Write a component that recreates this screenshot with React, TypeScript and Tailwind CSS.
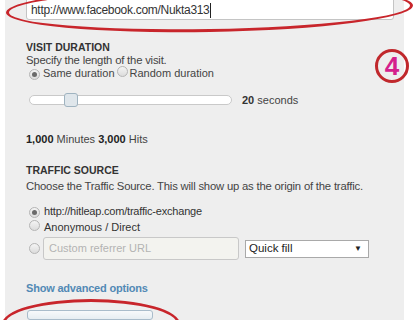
import React from "react";

function Radio({ checked }: { checked?: boolean }) {
  return (
    <span className="inline-flex items-center justify-center w-[11px] h-[11px] rounded-full border border-[#b5b5b5] bg-gradient-to-b from-[#f4f4f4] to-[#dcdcdc] shrink-0">
      {checked && <span className="w-[5px] h-[5px] rounded-full bg-[#6a6a6a]" />}
    </span>
  );
}

export default function App() {
  return (
    <div
      className="relative w-[420px] h-[320px] overflow-hidden bg-white text-[#333]"
      style={{ fontFamily: '"Liberation Sans", Arial, sans-serif' }}
    >
      <div className="ml-[5px] w-[399px] h-[320px] bg-[#eeeeee] pl-[21px] flex flex-col">
        {/* URL input */}
        <div className="-mt-[3px] w-[368px] h-[27px] border border-[#c4c4c4] rounded-[3px] bg-white flex items-center pl-[4px] pt-[3px] text-[12px] tracking-[-0.3px] text-[#333]">
          <span>http://www.facebook.com/Nukta313</span>
          <span className="w-[1px] h-[15px] bg-[#222]" />
        </div>

        <div className="mt-[20px] text-[10.5px] font-bold leading-[14px]">VISIT DURATION</div>
        <div className="-mt-[1px] text-[11.3px] leading-[14px] tracking-[-0.2px] text-[#444]">Specify the length of the visit.</div>
        <div className="-mt-[1px] flex items-center text-[11px] leading-[14px] text-[#444]">
          <span className="ml-[3px]"><Radio checked /></span>
          <span className="ml-[3px]">Same duration</span>
          <span className="ml-[2px]"><Radio /></span>
          <span className="ml-[2px]">Random duration</span>
        </div>
        <div className="mt-[12px] pl-[3px] grid grid-cols-[213px_auto] items-center">
          <div className="relative h-[10px] w-[203px] rounded-[5px] border border-[#c9c9c9] bg-white">
            <div className="absolute left-[34px] top-[-3px] w-[14px] h-[14px] rounded-[3px] border border-[#9fb3c0] bg-[#dfe6eb]" />
          </div>
          <div className="text-[11px] text-[#444]">
            <span className="font-bold text-[#333]">20</span> seconds
          </div>
        </div>

        <div className="mt-[23px] text-[11px] leading-[14px] text-[#444]">
          <span className="font-bold text-[#222]">1,000</span> Minutes <span className="font-bold text-[#222]">3,000</span> Hits
        </div>

        <div className="mt-[17px] text-[10.5px] font-bold leading-[14px]">TRAFFIC SOURCE</div>
        <div className="mt-[2px] text-[11.3px] leading-[14px] tracking-[-0.2px] text-[#444]">
          Choose the Traffic Source. This will show up as the origin of the traffic.
        </div>

        <div className="mt-[11px] flex items-center text-[11px] leading-[14px] text-[#333]">
          <span className="ml-[3px]"><Radio checked /></span>
          <span className="ml-[4px] tracking-[-0.2px]">http://hitleap.com/traffic-exchange</span>
        </div>
        <div className="mt-[2px] flex items-center text-[11px] leading-[14px] text-[#333]">
          <span className="ml-[3px]"><Radio /></span>
          <span className="ml-[4px]">Anonymous / Direct</span>
        </div>
        <div className="mt-[3px] flex items-center">
          <span className="ml-[3px]"><Radio /></span>
          <div className="ml-[3px] w-[196px] h-[23px] border border-[#c8c8c8] rounded-[3px] bg-[#f3f3ef] flex items-center pl-[5px] text-[11px] text-[#b3b3b3]">
            Custom referrer URL
          </div>
          <div className="ml-[6px] w-[124px] h-[18px] border border-[#a9a9a9] bg-white flex items-center justify-between pl-[3px] pr-[6px] text-[11.5px] text-[#222]">
            <span>Quick fill</span>
            <span className="text-[8px]">▼</span>
          </div>
        </div>

        <div className="mt-[20px] text-[11px] leading-[14px] font-bold tracking-[-0.2px] text-[#5289b5]">Show advanced options</div>

        <div className="mt-[15px] ml-[1px] w-[126px] h-[20px] border border-[#a9bccb] rounded-[3px] bg-gradient-to-b from-[#f7f9fb] to-[#e6edf2]" />
      </div>

      {/* annotations */}
      <div className="absolute left-[6px] -top-[14px] w-[407px] h-[46px] rounded-[50%] border-[3px] border-[#c8252b] -rotate-[1deg]" />
      <div className="absolute left-[375px] top-[49px] w-[34px] h-[34px] rounded-full border-[3px] border-[#c0282c] flex items-center justify-center">
        <span className="text-[26px] font-bold text-[#d4208c] leading-none">4</span>
      </div>
      <div className="absolute left-[2px] top-[299px] w-[178px] h-[50px] rounded-[50%] border-[3px] border-[#c8252b]" />
    </div>
  );
}
